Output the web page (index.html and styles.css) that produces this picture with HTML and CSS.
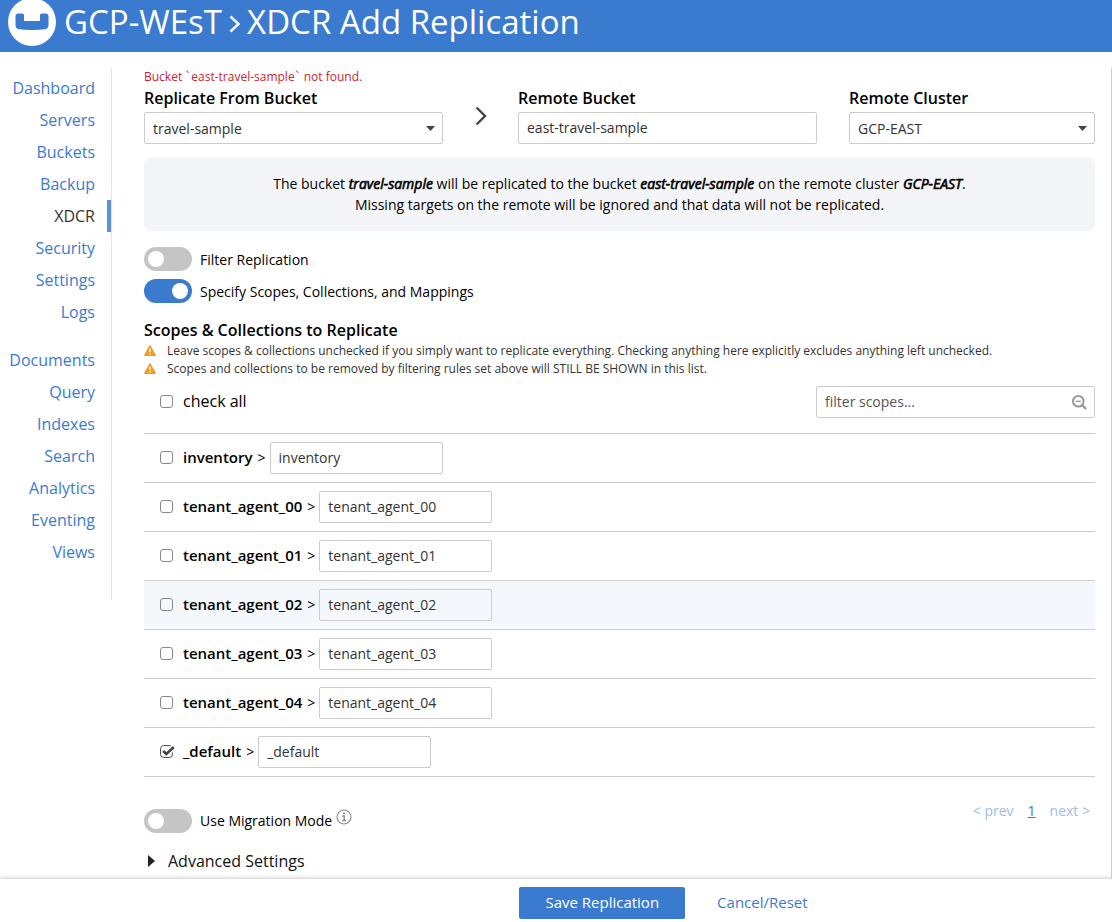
FILE: index.html
```html
<!DOCTYPE html>
<html lang="en">
<head>
<meta charset="utf-8">
<meta name="viewport" content="width=device-width, initial-scale=1">
<title>XDCR Add Replication</title>
<link rel="stylesheet" href="styles.css">
</head>
<body>
<header class="header">
  <svg class="logo" width="48" height="48" viewBox="0 0 48 48" aria-hidden="true">
    <circle cx="24" cy="24" r="24" fill="#fff"/>
    <path d="M7.500 18.500C7.500 16.500 8.500 15.500 10.500 15.500H14C15.300 15.500 16 16.300 16 17.600V23H32V17.600C32 16.300 32.700 15.500 34 15.500H37.500C39.500 15.500 40.500 16.500 40.500 18.500V27C40.500 29.500 39.200 30.800 37 31.200C29 32.300 19 32.300 11 31.200C8.800 30.800 7.500 29.500 7.500 27Z" fill="#3a7bd0"/>
  </svg>
  <h1 class="title">GCP-WEsT
    <svg class="crumb" width="12" height="20" viewBox="0 0 12 20" fill="none" stroke="#fff" stroke-width="2.400" aria-hidden="true"><path d="M1.500 2.500 9.500 10 1.500 17.500"/></svg>
    XDCR Add Replication</h1>
</header>

<div class="page">
  <nav class="nav">
    <a href="#">Dashboard</a>
    <a href="#">Servers</a>
    <a href="#">Buckets</a>
    <a href="#">Backup</a>
    <a href="#" class="current">XDCR</a>
    <a href="#">Security</a>
    <a href="#">Settings</a>
    <a href="#">Logs</a>
    <a href="#" class="group">Documents</a>
    <a href="#">Query</a>
    <a href="#">Indexes</a>
    <a href="#">Search</a>
    <a href="#">Analytics</a>
    <a href="#">Eventing</a>
    <a href="#">Views</a>
  </nav>

  <main class="content">
    <p class="error">Bucket <span class="tick">`</span>east-travel-sample<span class="tick">`</span> not found.</p>
    <div class="targets">
      <div class="field">
        <label for="from">Replicate From Bucket</label>
        <select id="from" class="control"><option>travel-sample</option></select>
      </div>
      <svg class="arrow" width="12" height="20" viewBox="0 0 12 20" fill="none" stroke="#444" stroke-width="2.400" aria-hidden="true"><path d="M1.500 1.500 10 10 1.500 18.500"/></svg>
      <div class="field">
        <label for="remote">Remote Bucket</label>
        <input id="remote" class="control" type="text" value="east-travel-sample">
      </div>
      <div class="field cluster">
        <label for="cluster">Remote Cluster</label>
        <select id="cluster" class="control"><option>GCP-EAST</option></select>
      </div>
    </div>

    <p class="notice">The bucket <strong>travel-sample</strong> will be replicated to the bucket <strong>east-travel-sample</strong> on the remote cluster <strong>GCP-EAST</strong>.<br>Missing targets on the remote will be ignored and that data will not be replicated.</p>

    <div class="toggles">
      <label class="toggle"><input type="checkbox"><span>Filter Replication</span></label>
      <label class="toggle"><input type="checkbox" checked><span>Specify Scopes, Collections, and Mappings</span></label>
    </div>

    <h2 class="section">Scopes &amp; Collections to Replicate</h2>
    <p class="warning"><svg width="12" height="11" viewBox="0 0 12 11" aria-hidden="true"><path d="M6 .7 11.300 10.300H.7Z" fill="#f39a26" stroke="#f39a26" stroke-width="1.300" stroke-linejoin="round"/><path d="M6 3.500V7M6 8V9.500" stroke="#fff" stroke-width="1.500"/></svg>Leave scopes &amp; collections unchecked if you simply want to replicate everything. Checking anything here explicitly excludes anything left unchecked.</p>
    <p class="warning"><svg width="12" height="11" viewBox="0 0 12 11" aria-hidden="true"><path d="M6 .7 11.300 10.300H.7Z" fill="#f39a26" stroke="#f39a26" stroke-width="1.300" stroke-linejoin="round"/><path d="M6 3.500V7M6 8V9.500" stroke="#fff" stroke-width="1.500"/></svg>Scopes and collections to be removed by filtering rules set above will STILL BE SHOWN in this list.</p>

    <div class="listbar">
      <label class="check"><input type="checkbox"><span>check all</span></label>
      <div class="search">
        <input class="control" type="text" placeholder="filter scopes..." aria-label="filter scopes">
        <svg width="15" height="15" viewBox="0 0 15 15" fill="none" stroke="#999" aria-hidden="true"><circle cx="6.300" cy="6.300" r="5.300" stroke-width="2"/><path d="M3.700 6.300H8.900" stroke-width="1.300"/><path d="M10.200 10.200 14 14" stroke-width="2.400"/></svg>
      </div>
    </div>

    <ul class="scopes">
      <li><label class="check"><input type="checkbox"><strong>inventory</strong></label><span class="gt">&gt;</span><input class="control" type="text" value="inventory" aria-label="inventory target"></li>
      <li><label class="check"><input type="checkbox"><strong>tenant_agent_00</strong></label><span class="gt">&gt;</span><input class="control" type="text" value="tenant_agent_00" aria-label="tenant_agent_00 target"></li>
      <li><label class="check"><input type="checkbox"><strong>tenant_agent_01</strong></label><span class="gt">&gt;</span><input class="control" type="text" value="tenant_agent_01" aria-label="tenant_agent_01 target"></li>
      <li class="hovered"><label class="check"><input type="checkbox"><strong>tenant_agent_02</strong></label><span class="gt">&gt;</span><input class="control" type="text" value="tenant_agent_02" aria-label="tenant_agent_02 target"></li>
      <li><label class="check"><input type="checkbox"><strong>tenant_agent_03</strong></label><span class="gt">&gt;</span><input class="control" type="text" value="tenant_agent_03" aria-label="tenant_agent_03 target"></li>
      <li><label class="check"><input type="checkbox"><strong>tenant_agent_04</strong></label><span class="gt">&gt;</span><input class="control" type="text" value="tenant_agent_04" aria-label="tenant_agent_04 target"></li>
      <li><label class="check"><input type="checkbox" checked><strong>_default</strong></label><span class="gt">&gt;</span><input class="control" type="text" value="_default" aria-label="_default target"></li>
    </ul>

    <div class="after">
      <div class="migration">
        <label class="toggle"><input type="checkbox"><span>Use Migration Mode</span></label>
        <svg width="16" height="16" viewBox="0 0 16 16" fill="none" stroke="#888" aria-hidden="true"><circle cx="8" cy="8" r="7" stroke-width="1.100"/><path d="M8 3.500V5.300" stroke-width="1.900"/><path d="M6.300 7H8.200V11.500M6 11.600H10" stroke-width="1.400"/></svg>
      </div>
      <div class="pager"><a href="#" class="off">&lt; prev</a><a href="#" class="page-on">1</a><a href="#" class="off">next &gt;</a></div>
    </div>

    <button class="advanced" type="button"><svg width="7" height="12" viewBox="0 0 7 12" aria-hidden="true"><path d="M0 0 7 6 0 12Z" fill="#222"/></svg>Advanced Settings</button>
  </main>
</div>

<footer class="footer">
  <button class="save" type="button">Save Replication</button>
  <a href="#">Cancel/Reset</a>
</footer>
</body>
</html>
```

FILE: styles.css
```css
* { box-sizing: border-box; }

body {
  margin: 0;
  min-height: 100vh;
  display: flex;
  flex-direction: column;
  background: #fff;
  color: #000;
  font: 14px/20px "Open Sans", "Noto Sans", sans-serif;
}

h1, h2, p, ul { margin: 0; padding: 0; }
a { color: #3a7bd0; text-decoration: none; }
input, select, button { font: inherit; margin: 0; }

.header {
  height: 52px;
  padding: 0 8px 8px;
  display: flex;
  align-items: center;
  gap: 8px;
  background: #3a7bd0;
  color: #fff;
}
.logo { flex: none; }
.title {
  font-size: 33px;
  line-height: 44px;
  font-weight: 400;
  white-space: nowrap;
}
.crumb { margin: 0 -2px; }

.page {
  flex: 1;
  display: flex;
  align-items: flex-start;
  padding-top: 16px;
}

.nav {
  flex: none;
  width: 112px;
  padding: 4px 0 32px;
  display: flex;
  flex-direction: column;
  border-right: 1px solid #e4e4e4;
  font-size: 16px;
  line-height: 32px;
  text-align: right;
}
.nav a { padding-right: 12px; border-right: 4px solid transparent; }
.nav .current { color: #333; border-color: #5c94dc; }
.nav .group { margin-top: 16px; }

.content {
  flex: 1;
  align-self: stretch;
  min-width: 0;
  padding: 0 16px 0 32px;
  border-right: 1px solid #ccc;
}

.error { color: #c9252f; font-size: 12px; line-height: 18px; }
.tick { font-family: "DejaVu Sans", sans-serif; line-height: 1; }

.control {
  display: block;
  width: 100%;
  height: 32px;
  padding: 0 8px 2px;
  border: 1px solid #ccc;
  border-radius: 2px;
  background: transparent;
  color: #333;
}
.control::placeholder { color: #555; opacity: 1; }
select.control {
  appearance: none;
  padding: 2px 8px 0;
  background: url("data:image/svg+xml,%3Csvg xmlns='http://www.w3.org/2000/svg' width='9' height='5'%3E%3Cpath d='M0 0H9L4.500 5Z' fill='%23444'/%3E%3C/svg%3E") right 7px center no-repeat;
}

.targets {
  display: grid;
  grid-template-columns: 1fr 75px 1fr 278px;
  align-items: end;
}
.field label {
  display: block;
  font-size: 16px;
  line-height: 24px;
  font-weight: 600;
  padding-bottom: 2px;
}
.cluster { padding-left: 32px; }
.arrow { justify-self: center; margin-bottom: 18px; }

.notice {
  margin: 13px 0 16px;
  padding: 16px;
  border-radius: 8px;
  background: #f4f5f8;
  line-height: 21px;
  text-align: center;
}
.notice strong {
  font-weight: 400;
  font-style: italic;
  -webkit-text-stroke: 0.6px currentColor;
}

.toggles { display: grid; gap: 8px; }
.toggles span { padding-top: 2px; }
.toggle { display: flex; align-items: center; gap: 8px; }
.toggle input {
  appearance: none;
  width: 48px;
  height: 24px;
  padding: 4px;
  border-radius: 12px;
  background: #c5c5c5;
  display: flex;
}
.toggle input::before {
  content: "";
  width: 16px;
  height: 16px;
  border-radius: 50%;
  background: #fff;
}
.toggle input:checked { background: #3a7bd0; justify-content: flex-end; }

.section { margin-top: 15px; font-size: 16px; line-height: 24px; font-weight: 600; }
.warning {
  display: flex;
  align-items: center;
  gap: 11px;
  color: #333;
  font-size: 12px;
  line-height: 18px;
}
.warning svg { margin-bottom: 1px; }

.check { display: flex; align-items: center; gap: 10px; padding-bottom: 2px; }
.check input {
  appearance: none;
  width: 13px;
  height: 13px;
  border: 1px solid #888;
  border-radius: 3px;
}
.check input:checked {
  width: 15px;
  margin-right: -2px;
  border: 0;
  background: url("data:image/svg+xml,%3Csvg xmlns='http://www.w3.org/2000/svg' viewBox='0 0 15 13' fill='none' stroke='%23444'%3E%3Cpath d='M11 1.200Q10.500 .7 9.500 .6H3.500Q.6 .6 .6 3.500V9.500Q.6 12.400 3.500 12.400H9.500Q12.400 12.400 12.400 9.500V7.500'/%3E%3Cpath d='M3.200 6 6.300 9 13.800 2' stroke-width='2.600'/%3E%3C/svg%3E") center / 15px 13px no-repeat;
}

.listbar {
  display: flex;
  justify-content: space-between;
  align-items: center;
  padding: 8px 0 15px 16px;
}
.listbar .check { font-size: 16px; }
.search { display: flex; align-items: center; width: 279px; }
.search .control { padding-right: 32px; }
.search svg { flex: none; margin: 1px 0 0 -23px; }

.scopes { list-style: none; border-top: 1px solid #ccc; }
.scopes li {
  display: flex;
  align-items: center;
  padding: 8px 16px;
  border-bottom: 1px solid #ccc;
}
.scopes strong { font-weight: 600; font-size: 15px; }
.scopes .gt { padding: 0 4px 0 5px; }
.scopes .control { width: 173px; }
.scopes .hovered { background: #f4f8fd; }

.after {
  display: flex;
  justify-content: space-between;
  align-items: flex-start;
  padding-top: 24px;
}
.migration { display: flex; gap: 4px; padding-top: 8px; }
.pager { display: flex; gap: 14px; padding-right: 5px; }
.pager .off { color: #9cbde8; }
.pager .page-on { text-decoration: underline; }

.advanced {
  display: flex;
  align-items: center;
  gap: 13px;
  margin-top: 16px;
  padding: 0 4px;
  border: 0;
  background: none;
  color: #111;
  font-size: 16px;
  line-height: 24px;
}

.footer {
  position: relative;
  display: flex;
  align-items: center;
  gap: 32px;
  justify-content: center;
  height: 43px;
  padding: 8px 0 3px 215px;
  background: #fff;
  box-shadow: 0 -1px 4px #ccc;
  font-size: 15px;
}
.footer a { padding-bottom: 2px; }
.save {
  height: 32px;
  padding: 0 26px 2px;
  border: 0;
  border-radius: 2px;
  background: #3a7bd0;
  color: #fff;
}
```
